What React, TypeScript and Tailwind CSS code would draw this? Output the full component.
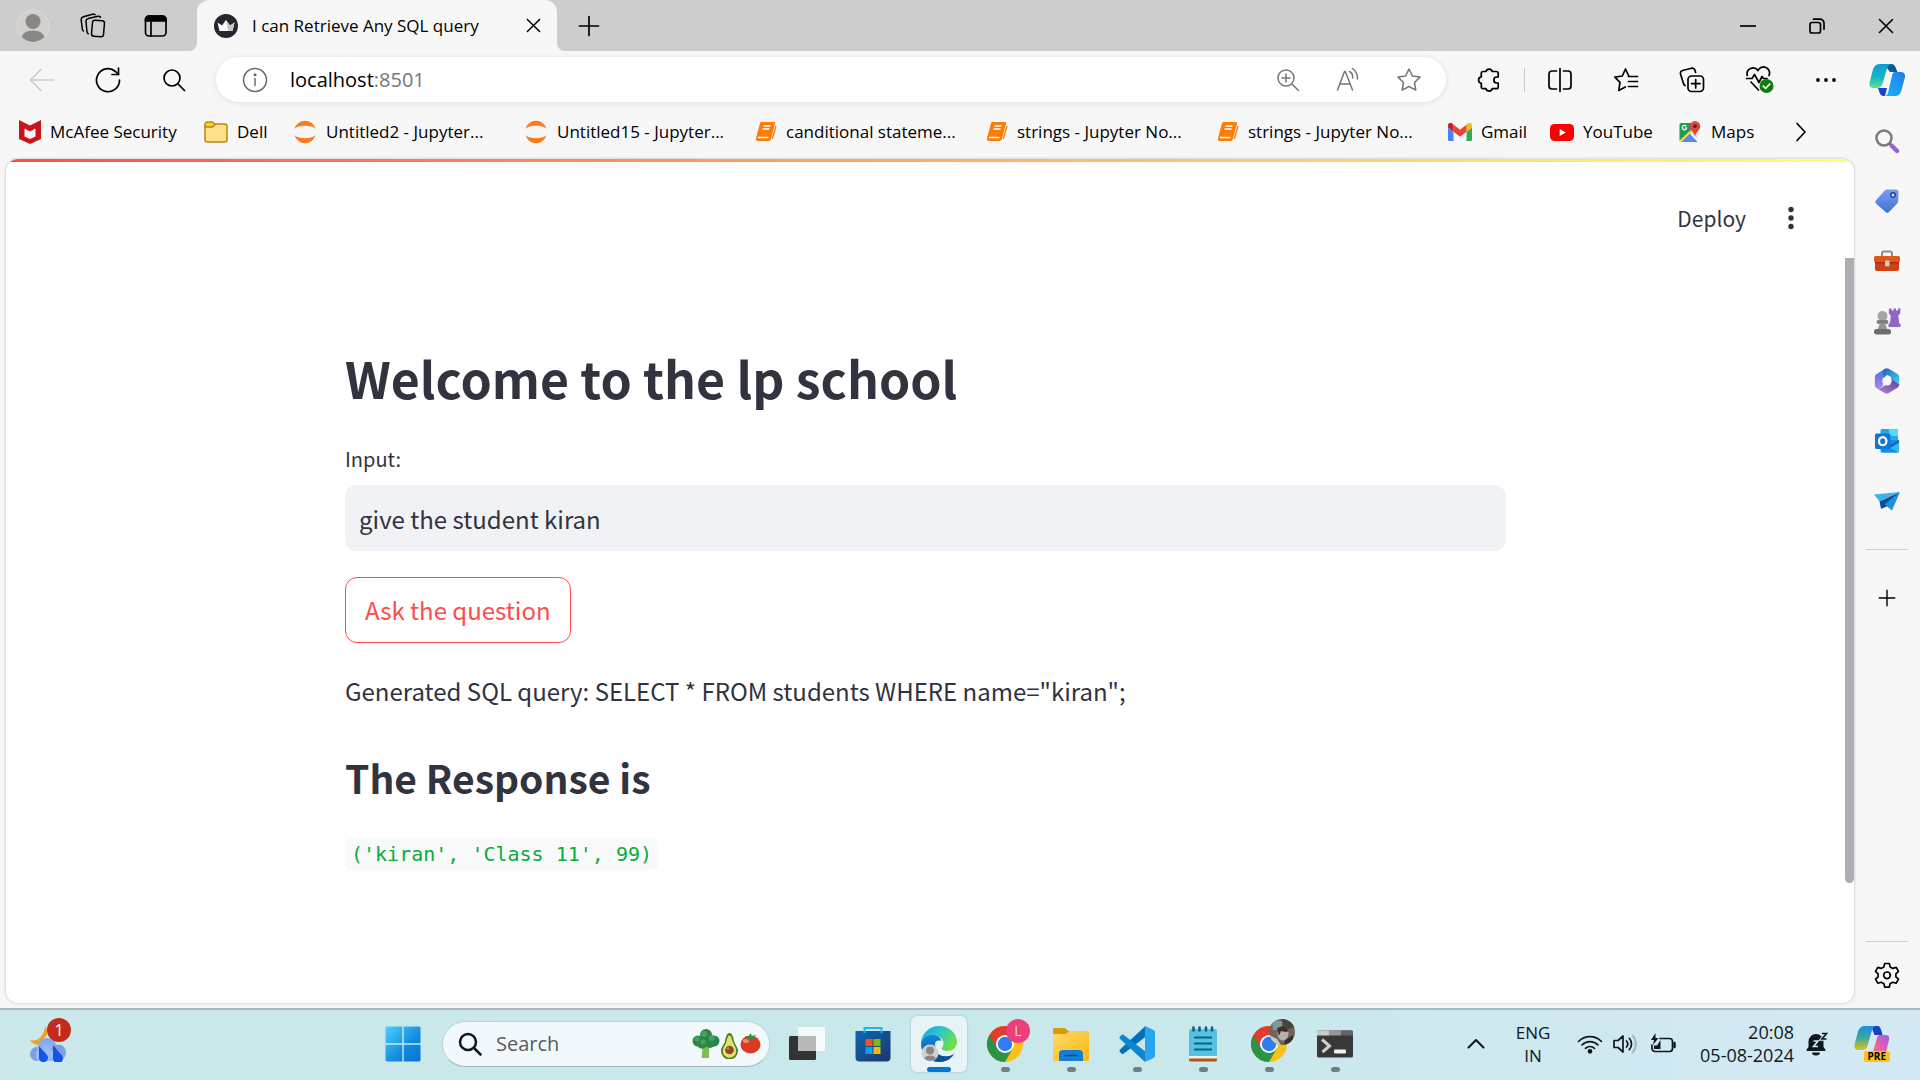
import React from "react";

type P = { className?: string };
const line = {
  fill: "none",
  stroke: "currentColor",
  strokeWidth: 1.7,
  strokeLinecap: "round" as const,
  strokeLinejoin: "round" as const,
};

function Avatar({ className }: P) {
  return (
    <svg viewBox="0 0 34 34" className={className} aria-hidden="true">
      <circle cx="17" cy="17" r="16" fill="#d2d0ce" stroke="#dedcda" />
      <circle cx="17" cy="12.500" r="7.500" fill="#8a8683" />
      <path d="M5.500 28a12 9 0 0 1 23 0a16 16 0 0 1-23 0z" fill="#8a8683" />
    </svg>
  );
}
function Workspaces() {
  return (
    <svg viewBox="0 0 26 26" className="size-[26px]" {...line} strokeWidth={1.500} aria-hidden="true">
      <rect x="12" y="7.500" width="12" height="16" rx="2.500" transform="rotate(5 18 15.500)" />
      <path d="M8.300 20.800a3 3 0 0 1-1.300-2L6 8.800a3 3 0 0 1 2.200-3.200L18 3.300a2.500 2.500 0 0 1 2.500 1" />
      <path d="M3.300 18a3 3 0 0 1-1-1.800L1.200 7a3 3 0 0 1 2.200-3.200L12.500 1.200a2.500 2.500 0 0 1 2.500.6" />
    </svg>
  );
}
function TabActions() {
  return (
    <svg viewBox="0 0 24 24" className="size-6" {...line} aria-hidden="true">
      <rect x="1.500" y="2" width="20.500" height="20" rx="3.500" />
      <path d="M1.500 7V5.500A3.500 3.500 0 0 1 5 2h13.500A3.500 3.500 0 0 1 22 5.500V7z" fill="currentColor" />
      <path d="M7 7.500V22" />
    </svg>
  );
}
function Crown() {
  return (
    <svg viewBox="0 0 24 24" className="size-6 shrink-0" aria-hidden="true">
      <circle cx="12" cy="12" r="12" fill="#262730" />
      <path d="M3.500 8.500l4.500 3L12 6l4 5.500 4.500-3L18.500 17h-13z" fill="#fff" />
      <path d="M12 6l4 5.500 4.500-3L18.500 17H14z" fill="#c9c9cc" />
    </svg>
  );
}
function Cross({ className }: P) {
  return (
    <svg viewBox="0 0 16 16" className={className} {...line} strokeWidth={1.600} aria-hidden="true">
      <path d="M1.500 1.500l13 13M14.500 1.500l-13 13" />
    </svg>
  );
}
function Plus({ className }: P) {
  return (
    <svg viewBox="0 0 22 22" className={className} {...line} aria-hidden="true">
      <path d="M11 1.500v19M1.500 11h19" />
    </svg>
  );
}
function Minimize() {
  return (
    <svg viewBox="0 0 16 16" className="size-4" {...line} strokeLinecap="butt" aria-hidden="true">
      <path d="M0 8h16" />
    </svg>
  );
}
function Restore() {
  return (
    <svg viewBox="0 0 16 16" className="size-4" {...line} aria-hidden="true">
      <rect x="1" y="4.500" width="10.500" height="10.500" rx="2" />
      <path d="M4.500 1.200H11a4 4 0 0 1 4 4v6" />
    </svg>
  );
}
function Back() {
  return (
    <svg viewBox="0 0 26 26" className="size-[26px]" {...line} strokeWidth={1.500} aria-hidden="true">
      <path d="M24.500 13H2M12 2.500L1.500 13 12 23.500" />
    </svg>
  );
}
function Refresh() {
  return (
    <svg viewBox="0 0 26 26" className="size-[26px]" {...line} aria-hidden="true">
      <path d="M24.500 13A11.500 11.500 0 1 1 20.500 4.500L23.500 7.500" />
      <path d="M23.500 1v6.500H17" />
    </svg>
  );
}
function Magnifier({ className, strokeWidth = 1.7 }: P & { strokeWidth?: number }) {
  return (
    <svg viewBox="0 0 24 24" className={className} {...line} strokeWidth={strokeWidth} aria-hidden="true">
      <circle cx="10" cy="10" r="8" />
      <path d="M16 16l6.500 6.500" />
    </svg>
  );
}
function Info() {
  return (
    <svg viewBox="0 0 26 26" className="size-[26px] shrink-0 text-[#6b6b6b]" {...line} strokeWidth={1.500} aria-hidden="true">
      <circle cx="13" cy="13" r="11.500" />
      <path d="M13 11.500v7" />
      <circle cx="13" cy="7.800" r=".8" fill="currentColor" />
    </svg>
  );
}
function ZoomIn() {
  return (
    <svg viewBox="0 0 24 24" className="size-6" {...line} strokeWidth={1.500} aria-hidden="true">
      <circle cx="10" cy="10" r="8" />
      <path d="M16 16l6.500 6.500M10 6v8M6 10h8" />
    </svg>
  );
}
function ReadAloud() {
  return (
    <svg viewBox="0 0 26 26" className="size-[26px]" {...line} strokeWidth={1.500} aria-hidden="true">
      <path d="M2.500 23L9.500 4.500h.8L17.500 23M5 17h10" />
      <path d="M14.500 4.500a6 6 0 0 1 3 6.500M17.500 1.500A12 12 0 0 1 22.500 12" />
    </svg>
  );
}
function Star() {
  return (
    <svg viewBox="0 0 26 26" className="size-[26px]" {...line} strokeWidth={1.500} aria-hidden="true">
      <path d="M13 2l3.400 7 7.600 1.100-5.500 5.400 1.300 7.600L13 19.500l-6.800 3.600 1.300-7.600L2 10.100 9.600 9z" />
    </svg>
  );
}
function Puzzle() {
  return (
    <svg viewBox="0 0 26 26" className="size-[26px]" {...line} aria-hidden="true">
      <path d="M10 4.500a3.200 3.200 0 0 1 6.200 0h4.300A1.700 1.700 0 0 1 22.200 6.200V10h-1.400a3 3 0 0 0 0 6h1.400v4a1.700 1.700 0 0 1-1.700 1.700h-4.300a3.200 3.200 0 0 1-6.200 0H7A1.700 1.700 0 0 1 5.300 20v-3.700a3.300 3.300 0 0 1 0-6.500V6.200A1.700 1.700 0 0 1 7 4.500z" />
    </svg>
  );
}
function Split() {
  return (
    <svg viewBox="0 0 26 26" className="size-[26px]" {...line} aria-hidden="true">
      <path d="M13 1.500v23M9.500 4H5a3 3 0 0 0-3 3v12a3 3 0 0 0 3 3h4.500M16.500 4H21a3 3 0 0 1 3 3v12a3 3 0 0 1-3 3h-4.500" />
    </svg>
  );
}
function Favorites() {
  return (
    <svg viewBox="0 0 26 26" className="size-[26px]" {...line} aria-hidden="true">
      <path d="M15.500 8.500L12.500 2 9.300 9 1.800 10.100l5.200 5.200L5.800 23.500l6.500-3.500" />
      <path d="M15.500 9.500H24.500M15.500 14.500H24.500M15.500 19.500H24.500" />
    </svg>
  );
}
function Collections() {
  return (
    <svg viewBox="0 0 26 26" className="size-[26px]" {...line} aria-hidden="true">
      <rect x="9" y="9" width="15.500" height="15.500" rx="3.500" />
      <path d="M16.700 12.500v8.500M12.500 16.700H21M6 18.500A3 3 0 0 1 4.500 16.500L1.500 7a3 3 0 0 1 2-3.500L12.500 1.200a3 3 0 0 1 3.500 2l.6 2.300" />
    </svg>
  );
}
function Essentials() {
  return (
    <svg viewBox="0 0 30 28" className="h-7 w-[30px]" {...line} aria-hidden="true">
      <path d="M2.300 9.500A6 6 0 0 1 13 4.500a6 6 0 0 1 11 5M6 16l7.500 8" />
      <path d="M1.500 12.500H7l2.500-4 4.500 8 3-6 1.500 2H22" />
      <circle cx="21.500" cy="20" r="7" fill="#107c10" stroke="none" />
      <path d="M18.300 20.200l2.300 2.300 4.200-4.500" stroke="#fff" />
    </svg>
  );
}
function Dots() {
  return (
    <svg viewBox="0 0 22 6" className="h-1.5 w-[22px]" fill="currentColor" aria-hidden="true">
      <circle cx="3" cy="3" r="1.900" />
      <circle cx="11" cy="3" r="1.900" />
      <circle cx="19" cy="3" r="1.900" />
    </svg>
  );
}
function Copilot() {
  return (
    <svg viewBox="0 0 36 32" className="h-8 w-9" aria-hidden="true">
      <defs>
        <linearGradient id="cpA" x1="0" y1="0" x2="0" y2="1">
          <stop offset="0" stopColor="#0b9ddb" />
          <stop offset=".55" stopColor="#12b5c4" />
          <stop offset="1" stopColor="#5fe08f" />
        </linearGradient>
        <linearGradient id="cpB" x1="1" y1="0" x2="0" y2="1">
          <stop offset="0" stopColor="#2a7be8" />
          <stop offset="1" stopColor="#13b4ff" />
        </linearGradient>
      </defs>
      <path d="M15 0h7c3 0 4 1.500 5 4.500L28.500 8H21z" fill="#0a5c93" />
      <path d="M9 24h9l-2 8h-1c-3 0-4-2-5-5z" fill="#1540d0" />
      <path d="M11 0h12c-3 0-4.300 2-5.200 5L13.500 20c-.8 2.800-2.500 4-5 4H4.500C1 24 0 21.500.7 18L4 5.500C5 2 7.500 0 11 0z" fill="url(#cpA)" />
      <path d="M26 8h6c3.200 0 4.600 2.400 3.800 6L32.500 26c-1 4-3 6-6.500 6H15c2.500 0 3.500-1.500 4.200-4L23 12c.7-2.500 1.200-4 3-4z" fill="url(#cpB)" />
    </svg>
  );
}
function McAfee() {
  return (
    <svg viewBox="0 0 22 24" className="h-6 w-[22px] shrink-0" aria-hidden="true">
      <path d="M0 0l11 5.500L22 0v19l-11 5-11-5z" fill="#c8151d" />
      <path d="M5.500 8.500l5.500 3 5.500-3v8L11 19l-5.500-2.500z" fill="#f7f7f7" />
    </svg>
  );
}
function Folder() {
  return (
    <svg viewBox="0 0 24 22" className="h-[22px] w-6 shrink-0" fill="#ffe08a" stroke="#b88a0b" strokeWidth="1.500" aria-hidden="true">
      <rect x="1" y="3" width="22" height="18" rx="2.500" />
      <path d="M1 6V3.500A2.500 2.500 0 0 1 3.500 1h5L11 3.500 8.500 6z" fill="#ffce2e" />
    </svg>
  );
}
function Jupyter() {
  return (
    <svg viewBox="0 0 24 24" className="size-6 shrink-0" fill="#fb7b22" aria-hidden="true">
      <path d="M1.500 9a10.800 10.800 0 0 1 21 0C19 4.800 5 4.800 1.500 9zM1.500 15a10.800 10.800 0 0 0 21 0C19 19.200 5 19.200 1.500 15z" />
    </svg>
  );
}
function Book() {
  return (
    <svg viewBox="0 0 22 20" className="h-5 w-[22px] shrink-0" aria-hidden="true">
      <path d="M6.500 0h12.300c1 0 1.500.8 1.200 1.700L16 16.500c-.4 1.300-1 2.500-2.300 2.500H3c-1.500 0-2.500-1.200-2-2.700L5 1.200C5.300.4 5.700 0 6.500 0z" fill="#fb7d07" />
      <path d="M3 15.500h10.500M8.500 4h7M7.500 7h7" stroke="#fff" strokeWidth="1.500" />
      <path d="M21 4L17.300 17" stroke="#fb7d07" strokeWidth="1.300" />
    </svg>
  );
}
function Gmail() {
  return (
    <svg viewBox="0 0 24 18" className="h-[18px] w-6 shrink-0" aria-hidden="true">
      <path d="M1.600 18h3.900V8.700L0 4.500v11.900C0 17.300.7 18 1.600 18z" fill="#4285f4" />
      <path d="M18.500 18h3.900c.9 0 1.600-.7 1.600-1.600V4.500l-5.500 4.200z" fill="#34a853" />
      <path d="M18.500 1.700v7L24 4.500V2.300c0-2-2.300-3.200-3.900-2z" fill="#fbbc04" />
      <path d="M5.500 8.700v-7l6.500 5 6.500-5v7l-6.500 5z" fill="#ea4335" />
      <path d="M0 2.300v2.200l5.500 4.200v-7L3.900.3C2.300-.9 0 .3 0 2.300z" fill="#c5221f" />
    </svg>
  );
}
function YouTube() {
  return (
    <svg viewBox="0 0 24 17" className="h-[17px] w-6 shrink-0" aria-hidden="true">
      <rect width="24" height="17" rx="4.500" fill="#f00" />
      <path d="M9.700 5v7l6-3.500z" fill="#fff" />
    </svg>
  );
}
function Maps() {
  return (
    <svg viewBox="0 0 24 24" className="size-6 shrink-0" aria-hidden="true">
      <path d="M3.500 3H15l5 8v9a2 2 0 0 1-2 2H3.500a2 2 0 0 1-2-2V5a2 2 0 0 1 2-2z" fill="#dfe3e6" />
      <path d="M3.500 3H15v7L1.500 21V5a2 2 0 0 1 2-2z" fill="#1e9d57" />
      <path d="M3 22l9-9 8 9z" fill="#4c8df6" />
      <path d="M1.500 20.500L15 8l1.500 1.500L3 22z" fill="#ffd147" />
      <path d="M13 14l7.500 7.500" stroke="#fff" strokeWidth="1.500" />
      <path d="M17 1a5.200 5.200 0 0 1 5.200 5.200c0 4-4.200 5.800-5.200 10.300-1-4.500-5.200-6.300-5.200-10.300A5.200 5.200 0 0 1 17 1z" fill="#e0483b" />
      <circle cx="17" cy="6.200" r="1.900" fill="#7d1a14" />
      <path d="M8.300 6.300a2.200 2.200 0 1 0 .4 1.700H6.800" fill="none" stroke="#fff" strokeWidth="1.200" />
    </svg>
  );
}
function ChevronRight() {
  return (
    <svg viewBox="0 0 12 20" className="h-5 w-3" {...line} aria-hidden="true">
      <path d="M2 1.500L10 10l-8 8.500" />
    </svg>
  );
}

/* Edge sidebar icons */
function SideSearch() {
  return (
    <svg viewBox="0 0 26 26" className="size-[26px]" fill="none" aria-hidden="true">
      <circle cx="10" cy="10" r="7.500" stroke="#7d7d7d" strokeWidth="2.600" />
      <path d="M15.500 15.500l2 2" stroke="#6a6a6a" strokeWidth="2.600" />
      <path d="M18 18l5 5" stroke="#9764c9" strokeWidth="4.500" strokeLinecap="round" />
    </svg>
  );
}
function SideTag() {
  return (
    <svg viewBox="0 0 26 26" className="size-[26px]" aria-hidden="true">
      <defs>
        <linearGradient id="tagG" x1="0" y1="0" x2="0" y2="1">
          <stop offset="0" stopColor="#74a1f2" />
          <stop offset="1" stopColor="#4570d6" />
        </linearGradient>
      </defs>
      <path d="M13 1.500h9A2.500 2.500 0 0 1 24.500 4l-.3 9.500a3 3 0 0 1-1 2L15 24a2.500 2.500 0 0 1-3.500 0L2 15.500a2.300 2.300 0 0 1 0-3.300l8.500-9.500A3.500 3.500 0 0 1 13 1.500z" fill="url(#tagG)" />
      <circle cx="19" cy="7" r="2.300" fill="#c9d9f7" stroke="#24408f" strokeWidth="1.400" />
    </svg>
  );
}
function SideTools() {
  return (
    <svg viewBox="0 0 28 24" className="h-6 w-7" aria-hidden="true">
      <path d="M9 8V4.500A2 2 0 0 1 11 2.500h6a2 2 0 0 1 2 2V8" fill="none" stroke="#8d8d8d" strokeWidth="2" />
      <path d="M2 11h24v9a2 2 0 0 1-2 2H4a2 2 0 0 1-2-2z" fill="#cf4111" />
      <rect x="1" y="7" width="26" height="6.500" rx="1.500" fill="#e2571c" />
      <rect x="2" y="13" width="24" height="1.300" fill="#9c2c09" />
      <rect x="12" y="11.500" width="4.500" height="6" rx="1" fill="#c9c9c9" />
    </svg>
  );
}
function SideGames() {
  return (
    <svg viewBox="0 0 28 28" className="size-7" aria-hidden="true">
      <path d="M16 1.500h2.500v2h2v-2H23v2h2v-2h2.300v5l-2 2 .8 7.500 1.400 1v3h-12v-3l1.500-1 .8-7.500-2-2z" fill="#9065c4" />
      <circle cx="9.500" cy="9" r="5" fill="#a5a5a5" />
      <rect x="3.500" y="13" width="12" height="4" rx="2" fill="#808080" />
      <path d="M7 16h5l2.500 7h-10z" fill="#949494" />
      <rect x="1" y="22" width="17" height="5.500" rx="2.500" fill="#6c6c6c" />
    </svg>
  );
}
function SideM365() {
  return (
    <svg viewBox="0 0 26 28" className="h-7 w-[26px]" aria-hidden="true">
      <defs>
        <linearGradient id="mA" x1="0" y1="0" x2="0" y2="1">
          <stop offset="0" stopColor="#4c73dc" />
          <stop offset="1" stopColor="#a98be6" />
        </linearGradient>
        <linearGradient id="mB" x1="0" y1="0" x2="1" y2="1">
          <stop offset="0" stopColor="#1d63b5" />
          <stop offset="1" stopColor="#4fd0fb" />
        </linearGradient>
        <linearGradient id="mC" x1="1" y1="0" x2="0" y2="1">
          <stop offset="0" stopColor="#5e3d8c" />
          <stop offset="1" stopColor="#b287e4" />
        </linearGradient>
      </defs>
      <path d="M10 2.500L2.500 7A3.500 3.500 0 0 0 .8 10v8a3.500 3.500 0 0 0 1.700 3l2 1.200L8.800 19V9z" fill="url(#mA)" />
      <path d="M8.800 12V5c0-1.500.5-2.500 2-3.200a4 4 0 0 1 4 0L23.500 7a3.500 3.500 0 0 1 1.700 3v8l-8-5.500V10L13 8z" fill="url(#mB)" />
      <path d="M25.200 17.500a3.500 3.500 0 0 1-1.700 3.200l-8.700 5.200a4 4 0 0 1-4 0L3 21.500c2.500.5 4-.5 5.800-1.800L17.200 15v-3z" fill="url(#mC)" />
      <circle cx="13" cy="14" r="4.600" fill="#f7f7f7" />
    </svg>
  );
}
function SideOutlook() {
  return (
    <svg viewBox="0 0 26 26" className="size-[26px]" aria-hidden="true">
      <rect x="6.500" y="1" width="17.500" height="14" rx="1.500" fill="#28a8ea" />
      <rect x="15" y="1" width="9" height="7" fill="#50d9ff" />
      <path d="M6.500 12h18.500v11a1.800 1.800 0 0 1-1.800 1.800H8.300A1.800 1.800 0 0 1 6.500 23z" fill="#1490df" />
      <path d="M25 12L14 19l11 5.500z" fill="#35b8f1" />
      <path d="M25 12v2.500L14 21v-2.500z" fill="#0a5fae" />
      <rect x="1" y="5.500" width="15.500" height="15.500" rx="1.500" fill="#0f78d4" />
      <ellipse cx="8.700" cy="13.200" rx="3.700" ry="4" fill="none" stroke="#fff" strokeWidth="2.300" />
    </svg>
  );
}
function SideSend() {
  return (
    <svg viewBox="0 0 28 22" className="h-[22px] w-7" aria-hidden="true">
      <path d="M1 4.500L27 2 6.500 11.500z" fill="#3cb4ee" />
      <path d="M27 2L19 20.500 11 14z" fill="#1c92df" />
      <path d="M27 2L6.500 11.500 8 19l3.500-4.500z" fill="#0d4f93" />
      <path d="M8 19l3.500-5 2.500 2.300z" fill="#0a3c78" />
    </svg>
  );
}
function Gear() {
  return (
    <svg viewBox="0 0 28 28" className="size-7" {...line} aria-hidden="true">
      <path d="M11.700 2.500h4.600l.8 3.400 2.700 1.500 3.400-1 2.300 4-2.600 2.400v3l2.600 2.400-2.300 4-3.400-1-2.700 1.500-.8 3.400h-4.600l-.8-3.400-2.700-1.500-3.400 1-2.300-4 2.600-2.400v-3L2.500 10.400l2.300-4 3.400 1 2.700-1.500z" />
      <circle cx="14" cy="14.300" r="3.300" />
    </svg>
  );
}

/* Taskbar icons */
function Weather() {
  return (
    <svg viewBox="0 0 36 36" className="size-9" aria-hidden="true">
      <defs>
        <linearGradient id="cloudG" x1="0" y1="0" x2="0" y2="1">
          <stop offset="0" stopColor="#7fa6ea" />
          <stop offset="1" stopColor="#a8c5fb" />
        </linearGradient>
      </defs>
      <path d="M15 0c2 3 3 5.500 2 9L8 19c-3-.5-6-2-8-5 6 2 14-2 15-14z" fill="#f5a01f" />
      <circle cx="7" cy="28" r="7" fill="#7d9fe6" />
      <circle cx="17" cy="22" r="10" fill="url(#cloudG)" />
      <circle cx="28" cy="26.500" r="8" fill="#7d9fe6" />
      <rect x="6" y="24" width="24" height="11" rx="4" fill="#9bbaf6" />
      <path d="M9 20l8 9a4.500 4.500 0 1 1-8 2zM23 19l9 10.500a5 5 0 1 1-9 2z" fill="#1553e6" />
    </svg>
  );
}
function WindowsLogo() {
  return (
    <svg viewBox="0 0 36 36" className="size-9" aria-hidden="true">
      <defs>
        <linearGradient id="winG" x1="0" y1="0" x2="1" y2="1">
          <stop offset="0" stopColor="#4bd0ff" />
          <stop offset=".6" stopColor="#128bdc" />
          <stop offset="1" stopColor="#0474d0" />
        </linearGradient>
      </defs>
      <path d="M1.500.5h15.800v16.800H.5V1.500zM18.700.5h15.800l1 1v15.800H18.700zM.5 18.700h16.800v16.800H1.500l-1-1zM18.700 18.700h16.800v15.800l-1 1H18.700z" fill="url(#winG)" />
    </svg>
  );
}
function Veggies() {
  return (
    <svg viewBox="0 0 70 30" className="h-[30px] w-[70px]" aria-hidden="true">
      <path d="M8 14h13l-4 6v9H9.500l1-8z" fill="#7cc04b" />
      <g fill="#2c8549">
        <circle cx="14" cy="6" r="6" />
        <circle cx="6" cy="12" r="5.500" />
        <circle cx="22" cy="12" r="5.500" />
        <circle cx="10" cy="14" r="5.500" />
        <circle cx="18" cy="14" r="5" />
      </g>
      <g fill="#45a25c">
        <circle cx="12" cy="5" r="3" />
        <circle cx="5" cy="10" r="2.500" />
        <circle cx="20" cy="9" r="3" />
        <circle cx="11" cy="13" r="2.500" />
      </g>
      <path d="M37.500 4c3 0 3.500 4 4.500 8s4 6 4 10a8.500 8.500 0 0 1-17 0c0-4 3-6 4-10s1.500-8 4.500-8z" fill="#4f7d1f" />
      <path d="M37.500 6.500c2 0 2.200 3.500 3.200 6.500s3.500 5.500 3.500 9a6.700 6.700 0 0 1-13.400 0c0-3.500 2.500-6 3.500-9s1.200-6.500 3.200-6.500z" fill="#dfe373" />
      <circle cx="37.500" cy="21" r="4.300" fill="#8b4d20" />
      <circle cx="36" cy="19.500" r="1.300" fill="#c48a55" />
      <ellipse cx="58.500" cy="15.500" rx="10" ry="9" fill="#d93a24" />
      <ellipse cx="54" cy="12" rx="3" ry="2" fill="#f08a72" />
      <path d="M59 4l.5 3 5-1-3.500 3 3 2.500-5-1.500-3 2 .5-3-4-1.500 4-.5z" fill="#3c8d35" />
    </svg>
  );
}
function TaskView() {
  return (
    <svg viewBox="0 0 36 36" className="size-9" aria-hidden="true">
      <rect x="0" y="10" width="27" height="24" rx="1.500" fill="#333" />
      <rect x="9" y="1" width="27" height="24" rx="1" fill="#fdfdfd" opacity=".85" />
      <rect x="9" y="10" width="18" height="15" fill="#b9b9b9" />
    </svg>
  );
}
function Store() {
  return (
    <svg viewBox="0 0 36 36" className="size-9" aria-hidden="true">
      <defs>
        <linearGradient id="storeG" x1="0" y1="0" x2="1" y2="1">
          <stop offset="0" stopColor="#0f65b8" />
          <stop offset="1" stopColor="#1c3767" />
        </linearGradient>
      </defs>
      <path d="M.5 5h35v26.500a4 4 0 0 1-4 4h-27a4 4 0 0 1-4-4z" fill="url(#storeG)" />
      <path d="M9.500 7V2h17v5" fill="none" stroke="#1bb5f0" strokeWidth="2" />
      <rect x="10.500" y="13" width="7" height="7" fill="#f25022" />
      <rect x="18.500" y="13" width="7" height="7" fill="#7fba00" />
      <rect x="10.500" y="21" width="7" height="7" fill="#00a4ef" />
      <rect x="18.500" y="21" width="7" height="7" fill="#ffb900" />
    </svg>
  );
}
function Edge() {
  return (
    <svg viewBox="0 0 36 36" className="size-9" aria-hidden="true">
      <defs>
        <linearGradient id="edgeA" x1="0" y1="0" x2="1" y2=".5">
          <stop offset="0" stopColor="#1f9fdf" />
          <stop offset=".5" stopColor="#2cc4cf" />
          <stop offset="1" stopColor="#6de043" />
        </linearGradient>
        <linearGradient id="edgeB" x1="0" y1="0" x2="0" y2="1">
          <stop offset="0" stopColor="#1286d6" />
          <stop offset="1" stopColor="#0c5aa8" />
        </linearGradient>
      </defs>
      <path d="M0 18C1 11 6 8.500 11 8.500c6 0 10 4 9.500 8.500-3-1-6 1-6 5 0 5 5 8.500 11 8.500 3 0 5.500-1 7.500-2.500C30 33 24.500 36 18 36A18 18 0 0 1 0 18z" fill="url(#edgeB)" />
      <path d="M13 21c0 6 5 9.500 12 9.500 3.500 0 6-1 8-2.500C30 33 24.500 36 18 36c-6-2-8-9-5-15z" fill="#124d92" />
      <path d="M0 17A18 18 0 0 1 18 0c10 0 18 7 18 16 0 5-4 9-9 9-4 0-6.500-1.200-6.500-2.800 0-1.200 2.500-2.200 2-5.200C22 12 17 9 12 9 6 9 2 12 0 17z" fill="url(#edgeA)" />
      <circle cx="18" cy="18.500" r="4" fill="#e6f4f8" />
      <circle cx="9" cy="27" r="8.500" fill="#d2d0ce" />
      <circle cx="9" cy="24.500" r="4" fill="#8a8683" />
      <path d="M3.300 32.500c1-4 10.500-4 11.500 0a8.500 8.500 0 0 1-11.500 0z" fill="#8a8683" />
    </svg>
  );
}
function Chrome() {
  return (
    <svg viewBox="0 0 36 36" className="size-9" aria-hidden="true">
      <circle cx="18" cy="18" r="18" fill="#fbc116" />
      <path d="M18 18L2.400 9A18 18 0 0 0 18 36l7.800-13.500z" fill="#2b9246" />
      <path d="M18 9h15.600A18 18 0 0 0 2.400 9l7.800 13.500z" fill="#e33b2e" />
      <circle cx="18" cy="18" r="9" fill="#fff" />
      <circle cx="18" cy="18" r="7.200" fill="#2f7bf0" />
    </svg>
  );
}
function Photo() {
  return (
    <svg viewBox="0 0 26 26" className="size-[26px]" aria-hidden="true">
      <clipPath id="photoClip">
        <circle cx="13" cy="13" r="13" />
      </clipPath>
      <g clipPath="url(#photoClip)">
        <rect width="26" height="26" fill="#6d655e" />
        <path d="M3 2h10v9H4z" fill="#7d9c91" />
        <path d="M12 0h14v8l-10 3z" fill="#4b433f" />
        <ellipse cx="14" cy="15" rx="5.500" ry="6.500" fill="#b9b0aa" />
        <path d="M8 9l6-2 6 5-3 1-5-1-2 5z" fill="#38312e" />
        <path d="M0 16l8 4 4 6H0z" fill="#c9c9c6" />
        <path d="M16 21l8-5v10h-9z" fill="#38322f" />
      </g>
    </svg>
  );
}
function Explorer() {
  return (
    <svg viewBox="0 0 36 36" className="size-9" aria-hidden="true">
      <defs>
        <linearGradient id="fileG" x1="0" y1="0" x2="1" y2="1">
          <stop offset="0" stopColor="#ffd968" />
          <stop offset="1" stopColor="#fcb713" />
        </linearGradient>
      </defs>
      <path d="M0 3.500A1.500 1.500 0 0 1 1.500 2H11c2 0 3 3 5 3h18v8H0z" fill="#d99a0b" />
      <path d="M0 8h12c2 0 3-3 5-3h17.500A1.500 1.500 0 0 1 36 6.500v27a1.500 1.500 0 0 1-1.500 1.500h-33A1.500 1.500 0 0 1 0 33.500z" fill="url(#fileG)" />
      <path d="M6 35v-7a4 4 0 0 1 4-4h16a4 4 0 0 1 4 4v7z" fill="#147fd2" />
      <path d="M11 29.500h14" stroke="#0a4f8d" strokeWidth="1.500" />
    </svg>
  );
}
function VSCode() {
  return (
    <svg viewBox="0 0 36 36" className="size-9" aria-hidden="true">
      <path d="M26.500 0L1 23.500l-.5 2L3 28l1.500-.2L27 10.500z" fill="#0070b8" />
      <path d="M3 8.500L.5 11l.3 1.800L26 36l1-10L4.500 8.700z" fill="#0f86cf" />
      <path d="M26 0l8.500 4c1 .5 1.500 1.200 1.500 2.300v23.400c0 1-.5 1.800-1.500 2.300L26 36z" fill="#29a5ef" />
    </svg>
  );
}
function Notepad() {
  return (
    <svg viewBox="0 0 36 36" className="size-9" aria-hidden="true">
      <path d="M4 29h28v5a1.500 1.500 0 0 1-1.500 1.500h-25A1.500 1.500 0 0 1 4 34z" fill="#b3541a" />
      <rect x="4" y="29" width="28" height="3.500" fill="#eef1f2" />
      <path d="M6 3h24a2 2 0 0 1 2 2v25H4V5a2 2 0 0 1 2-2z" fill="#54c2e0" />
      <path d="M9 11.500h18M9 17.500h18M9 23.500h18" stroke="#0a6287" strokeWidth="1.800" />
      <path d="M8.500 1.500v3M14.500 1.500v3M21 1.500v3M27 1.500v3" stroke="#0a6287" strokeWidth="2.600" strokeLinecap="round" />
    </svg>
  );
}
function Terminal() {
  return (
    <svg viewBox="0 0 36 36" className="size-9" aria-hidden="true">
      <rect y="4.500" width="36" height="27" rx="1.500" fill="#383838" />
      <path d="M1.500 4.500H12v5H0V6a1.500 1.500 0 0 1 1.500-1.500z" fill="#cbcbcb" />
      <rect x="12" y="4.500" width="12" height="5" fill="#979797" />
      <path d="M24 4.500h10.500A1.500 1.500 0 0 1 36 6v3.500H24z" fill="#636363" />
      <path d="M5 13.500l7.500 6.500L5.500 26" fill="none" stroke="#cfcfcf" strokeWidth="3" />
      <rect x="17" y="23.500" width="12" height="4" rx="1" fill="#f2f2f2" />
    </svg>
  );
}
function ChevronUp() {
  return (
    <svg viewBox="0 0 18 12" className="h-3 w-[18px]" {...line} strokeWidth={2} aria-hidden="true">
      <path d="M1.500 9.500L9 2l7.500 7.500" />
    </svg>
  );
}
function Wifi() {
  return (
    <svg viewBox="0 0 26 20" className="h-5 w-[26px]" {...line} aria-hidden="true">
      <path d="M1.500 7.500a16 16 0 0 1 23 0M5 11a11.300 11.300 0 0 1 16 0M8.500 14.300a6.500 6.500 0 0 1 9 0" />
      <circle cx="13" cy="17.300" r="1.500" fill="currentColor" />
    </svg>
  );
}
function Speaker() {
  return (
    <svg viewBox="0 0 26 22" className="h-[22px] w-[26px]" {...line} aria-hidden="true">
      <path d="M2 7.500h4L11 3v16l-5-4.500H2z" />
      <path d="M14.500 8a4.500 4.500 0 0 1 0 6M17.300 5.300a8.500 8.500 0 0 1 0 11.400" />
      <path d="M20.500 2.500a12.500 12.500 0 0 1 0 17" stroke="#9fb0b8" />
    </svg>
  );
}
function Battery() {
  return (
    <svg viewBox="0 0 26 22" className="h-[22px] w-[26px]" {...line} aria-hidden="true">
      <path d="M10 5.500h9.500a3 3 0 0 1 3 3v7a3 3 0 0 1-3 3H5a3 3 0 0 1-3-3V12" />
      <path d="M24.500 10v4" strokeWidth="2.500" />
      <path d="M4 16v-3.500h3l3.500-5.500v9z" fill="currentColor" stroke="none" />
      <path d="M5.500 0L1 7h3l-1 5 5.500-7H5.500z" fill="currentColor" stroke="none" />
    </svg>
  );
}
function Bell() {
  return (
    <svg viewBox="0 0 22 24" className="h-6 w-[22px]" aria-hidden="true">
      <path d="M10 2a7.500 7.500 0 0 1 7.500 7.500V15l2 2.800c.3.600 0 1.200-.7 1.200H1.200c-.7 0-1-.6-.7-1.200L2.500 15V9.500A7.500 7.500 0 0 1 10 2z" fill="#0c1a20" />
      <path d="M6 20.500h8a4 3 0 0 1-8 0z" fill="#0c1a20" />
      <path d="M7.500 9H12l-4.500 5.500H12" fill="none" stroke="#d4e9f4" strokeWidth="1.600" />
      <path d="M16 1.500h4.500L16 7h4.500" fill="none" stroke="#d4e9f4" strokeWidth="3.500" />
      <path d="M16 1.500h4.500L16 7h4.500" fill="none" stroke="#0c1a20" strokeWidth="1.600" />
    </svg>
  );
}
function CopilotPre() {
  return (
    <svg viewBox="0 0 36 28" className="h-7 w-9" aria-hidden="true">
      <defs>
        <linearGradient id="preA" x1="0" y1="0" x2="0" y2="1">
          <stop offset="0" stopColor="#1d8ee0" />
          <stop offset=".45" stopColor="#2fa7a3" />
          <stop offset="1" stopColor="#e4c21c" />
        </linearGradient>
        <linearGradient id="preB" x1="1" y1="0" x2="0" y2="1">
          <stop offset="0" stopColor="#9a5cf0" />
          <stop offset=".6" stopColor="#f0629a" />
          <stop offset="1" stopColor="#fb8a4e" />
        </linearGradient>
      </defs>
      <path d="M17 0h6c3 0 3.500 2 4.500 5l1 4h-8z" fill="#1c3fc6" />
      <path d="M11 0h12c-3 0-4.500 2-5.300 5L13.500 20c-.8 3-2.500 4-5 4H4C.5 24 0 21 .7 18L4 5.500C5 2 7.500 0 11 0z" fill="url(#preA)" />
      <path d="M26 9h5.500c3.200 0 4.300 2.200 3.500 5l-3.500 14H14.500c3 0 4.300-1.500 5-4L23 12c.6-2 1.200-3 3-3z" fill="url(#preB)" />
    </svg>
  );
}

function IconButton({ label, className = "", children }: { label: string; className?: string; children: React.ReactNode }) {
  return (
    <button type="button" aria-label={label} className={`flex shrink-0 items-center justify-center ${className}`}>
      {children}
    </button>
  );
}

const bookmarks: { name: string; icon: React.ReactNode; width: string }[] = [
  { name: "McAfee Security", icon: <McAfee />, width: "w-[185px]" },
  { name: "Dell", icon: <Folder />, width: "w-[89px]" },
  { name: "Untitled2 - Jupyter...", icon: <Jupyter />, width: "w-[231px]" },
  { name: "Untitled15 - Jupyter...", icon: <Jupyter />, width: "w-[231px]" },
  { name: "canditional stateme...", icon: <Book />, width: "w-[231px]" },
  { name: "strings - Jupyter No...", icon: <Book />, width: "w-[231px]" },
  { name: "strings - Jupyter No...", icon: <Book />, width: "w-[231px]" },
  { name: "Gmail", icon: <Gmail />, width: "w-[102px]" },
  { name: "YouTube", icon: <YouTube />, width: "w-[128px]" },
  { name: "Maps", icon: <Maps />, width: "w-[105px]" },
];

function TitleBar() {
  return (
    <header className="flex h-[51px] items-stretch bg-[#cdcdcd]">
      <div className="flex flex-1 bg-[#f7f7f7]">
        <div className="flex w-[197px] items-center rounded-br-lg bg-[#cdcdcd] pl-4">
          <IconButton label="Profile" className="w-[34px]"><Avatar className="size-[34px]" /></IconButton>
          <IconButton label="Workspaces" className="ml-[30px] w-[26px]"><Workspaces /></IconButton>
          <IconButton label="Tab actions" className="ml-[38px] w-6"><TabActions /></IconButton>
        </div>
        <div className="bg-[#cdcdcd]">
          <div className="flex h-full w-[360px] items-center rounded-t-xl bg-[#f7f7f7] pr-4 pl-[17px]">
            <Crown />
            <span className="ml-3.5 flex-1 truncate text-[17px]">I can Retrieve Any SQL query</span>
            <IconButton label="Close tab" className="size-4"><Cross className="size-[15px]" /></IconButton>
          </div>
        </div>
        <div className="flex flex-1 rounded-bl-lg bg-[#cdcdcd]">
          <IconButton label="New tab" className="ml-5 w-6"><Plus className="size-[22px]" /></IconButton>
          <div className="ml-auto flex items-stretch">
            <IconButton label="Minimize" className="w-[69px]"><Minimize /></IconButton>
            <IconButton label="Restore" className="w-[69px]"><Restore /></IconButton>
            <IconButton label="Close" className="w-[69px]"><Cross className="size-4" /></IconButton>
          </div>
        </div>
      </div>
    </header>
  );
}

function Toolbar() {
  return (
    <div className="flex h-[57px] items-center pr-[17px] pl-[29px]">
      <IconButton label="Back" className="w-[26px] text-[#cbcbcb]"><Back /></IconButton>
      <IconButton label="Refresh" className="ml-10 w-[26px]"><Refresh /></IconButton>
      <IconButton label="Search" className="ml-[41px] w-6"><Magnifier className="size-6" /></IconButton>
      <div className="ml-[30px] flex h-[45px] flex-1 items-center rounded-full bg-white pr-6 pl-[26px] shadow-[0_1px_6px_rgba(0,0,0,0.09)]">
        <Info />
        <a href="http://localhost:8501" className="ml-[22px] flex-1 text-xl">
          localhost<span className="text-[#767676]">:8501</span>
        </a>
        <div className="flex items-center gap-[35px] text-[#767676]">
          <IconButton label="Zoom"><ZoomIn /></IconButton>
          <IconButton label="Read aloud"><ReadAloud /></IconButton>
          <IconButton label="Add to favorites"><Star /></IconButton>
        </div>
      </div>
      <IconButton label="Extensions" className="ml-[30px]"><Puzzle /></IconButton>
      <span className="ml-[22px] h-6 w-px bg-[#c8c8c8]" />
      <div className="ml-[22px] flex items-center gap-10">
        <IconButton label="Split screen"><Split /></IconButton>
        <IconButton label="Favorites"><Favorites /></IconButton>
        <IconButton label="Collections"><Collections /></IconButton>
        <IconButton label="Browser essentials"><Essentials /></IconButton>
        <IconButton label="Settings and more"><Dots /></IconButton>
      </div>
    </div>
  );
}

function Bookmarks() {
  return (
    <nav aria-label="Bookmarks" className="flex h-[51px] items-center overflow-hidden pb-[3px] pl-[19px]">
      {bookmarks.map((b, i) => (
        <a key={i} href="#" className={`flex shrink-0 items-center gap-[9px] text-[17px] ${b.width}`}>
          {b.icon}
          <span className="whitespace-nowrap">{b.name}</span>
        </a>
      ))}
      <IconButton label="More bookmarks" className="ml-3"><ChevronRight /></IconButton>
    </nav>
  );
}

function Sidebar() {
  const apps: [string, React.ReactNode][] = [
    ["Search", <SideSearch />],
    ["Shopping", <SideTag />],
    ["Tools", <SideTools />],
    ["Games", <SideGames />],
    ["Microsoft 365", <SideM365 />],
    ["Outlook", <SideOutlook />],
    ["Drop", <SideSend />],
  ];
  return (
    <aside className="flex w-[66px] shrink-0 flex-col items-center">
      <IconButton label="Copilot" className="mb-0.5 h-[58px]"><Copilot /></IconButton>
      {apps.map(([name, icon]) => (
        <IconButton key={name} label={name} className="h-[60px]">{icon}</IconButton>
      ))}
      <span className="mt-[18px] h-px w-[42px] bg-[#cfcfcf]" />
      <IconButton label="Customize" className="mt-6 h-12"><Plus className="size-[18px]" /></IconButton>
      <span className="mt-auto h-px w-[42px] bg-[#cfcfcf]" />
      <IconButton label="Settings" className="h-[66px]"><Gear /></IconButton>
    </aside>
  );
}

function AppPage() {
  return (
    <main className="relative ml-1.5 flex-1 overflow-hidden rounded-xl bg-white font-['Noto_Sans_CJK_SC','Source_Sans_Pro',sans-serif] text-[#31333f] shadow-[0_0_3px_rgba(0,0,0,0.25)]">
      <div className="h-[3px] bg-linear-to-r from-[#ff4b4b] to-[#fffd80]" />
      <div className="flex items-center justify-end gap-9 pt-[35px] pr-[54px]">
        <button type="button" className="text-[21px] leading-[42px]">Deploy</button>
        <button type="button" aria-label="Main menu" className="flex w-[18px] justify-center">
          <svg viewBox="0 0 6 24" className="h-6 w-1.5" fill="#31333f" aria-hidden="true">
            <circle cx="3" cy="3.500" r="2.700" />
            <circle cx="3" cy="12" r="2.700" />
            <circle cx="3" cy="20.500" r="2.700" />
          </svg>
        </button>
      </div>
      <div className="pr-[9px]">
        <div className="mx-auto flex max-w-[1161px] flex-col items-start">
          <h1 className="mt-[103px] text-[50px] leading-[70px] font-bold">Welcome to the lp school</h1>
          <label htmlFor="question" className="mt-[31px] text-[20px] leading-8">Input:</label>
          <input
            id="question"
            type="text"
            defaultValue="give the student kiran"
            className="mt-2.5 h-[66px] w-full rounded-xl bg-[#f0f2f6] px-3.5 text-[24px] outline-none"
          />
          <button type="button" className="mt-[26px] h-[66px] rounded-xl border border-[#ff4b4b] px-[19px] text-[24px] text-[#ff4b4b]">
            Ask the question
          </button>
          <p className="mt-7 text-[24px] leading-10">Generated SQL query: SELECT * FROM students WHERE name="kiran";</p>
          <h2 className="mt-[39px] text-[39px] leading-[54px] font-bold">The Response is</h2>
          <code className="mt-[34px] rounded-md bg-[#f8f9fb] px-1.5 font-['DejaVu_Sans_Mono',monospace] text-[20px] leading-8 text-[#09ab3b]">
            ('kiran', 'Class 11', 99)
          </code>
        </div>
      </div>
      <span className="absolute top-[99px] right-0 h-[625px] w-[9px] rounded-b-full bg-[#aeaeb2]" />
    </main>
  );
}

function TaskItem({ label, running = false, children }: { label: string; running?: boolean; children: React.ReactNode }) {
  return (
    <button type="button" aria-label={label} className="relative flex h-14 w-[66px] items-center justify-center">
      {children}
      {running && <span className="absolute bottom-0 h-[5px] w-[9px] rounded-full bg-[#6f8085]" />}
    </button>
  );
}

function Taskbar() {
  return (
    <footer className="flex h-[72px] items-center border-t-2 border-[#a9b8bf] bg-linear-to-r from-[#cbe8ea] via-[#c9e8ec] via-60% to-[#d4e9f4] pb-0.5 text-[#10181c]">
      <div className="w-[370px] pl-[30px]">
        <button type="button" aria-label="Weather" className="relative flex">
          <Weather />
          <span className="absolute -top-2 left-[17px] flex size-6 items-center justify-center rounded-full bg-[#c42b1c] text-base text-white">1</span>
        </button>
      </div>
      <TaskItem label="Start"><WindowsLogo /></TaskItem>
      <label className="ml-1.5 flex h-[46px] w-[328px] items-center rounded-full border border-[#bcd3dc] border-b-[#9fb5be] bg-[#f2f9fc] pr-[7px] pl-[15px]">
        <Magnifier className="size-6 shrink-0" strokeWidth={2.500} />
        <input type="text" aria-label="Search" placeholder="Search" className="ml-3.5 w-0 flex-1 bg-transparent text-xl outline-none placeholder:text-[#565c60]" />
        <Veggies />
      </label>
      <div className="ml-1 flex">
        <TaskItem label="Task view"><TaskView /></TaskItem>
        <TaskItem label="Microsoft Store"><Store /></TaskItem>
        <button type="button" aria-label="Microsoft Edge" className="relative mx-[5px] flex size-14 items-center justify-center rounded-md bg-[#e6f4f8] shadow-[0_0_2px_rgba(0,60,80,0.3)]">
          <Edge />
          <span className="absolute bottom-0 h-[5px] w-6 rounded-full bg-[#0078d4]" />
        </button>
        <TaskItem label="Chrome" running>
          <Chrome />
          <span className="absolute top-[3px] right-2 flex size-6 items-center justify-center rounded-full bg-[#ec407a] text-sm text-[#fbd3e0]">L</span>
        </TaskItem>
        <TaskItem label="File Explorer" running><Explorer /></TaskItem>
        <TaskItem label="Visual Studio Code" running><VSCode /></TaskItem>
        <TaskItem label="Notepad" running><Notepad /></TaskItem>
        <TaskItem label="Chrome, second profile" running>
          <Chrome />
          <span className="absolute top-[3px] right-[7px]"><Photo /></span>
        </TaskItem>
        <TaskItem label="Terminal" running><Terminal /></TaskItem>
      </div>
      <div className="ml-auto flex items-center pr-[30px] text-[17px] leading-[23px]">
        <IconButton label="Hidden icons"><ChevronUp /></IconButton>
        <button type="button" className="ml-7 w-10 text-center">ENG IN</button>
        <IconButton label="Network" className="ml-6"><Wifi /></IconButton>
        <IconButton label="Volume" className="ml-[9px]"><Speaker /></IconButton>
        <IconButton label="Battery" className="ml-3"><Battery /></IconButton>
        <button type="button" className="ml-6 text-right text-lg leading-[23px] whitespace-nowrap">20:08<br />05-08-2024</button>
        <IconButton label="Notifications" className="ml-3"><Bell /></IconButton>
        <button type="button" aria-label="Copilot preview" className="relative ml-[26px] flex h-9">
          <CopilotPre />
          <span className="absolute right-0 bottom-0 rounded-xs bg-[#ffc20e] px-1 text-[10px] leading-[11px] font-bold text-black">PRE</span>
        </button>
      </div>
    </footer>
  );
}

export default function App() {
  return (
    <div className="flex min-h-screen flex-col bg-[#f7f7f7] font-['Open_Sans','Segoe_UI',sans-serif] text-black">
      <TitleBar />
      <div className="flex flex-1">
        <div className="flex min-w-0 flex-1 flex-col pb-[5px]">
          <Toolbar />
          <Bookmarks />
          <AppPage />
        </div>
        <Sidebar />
      </div>
      <Taskbar />
    </div>
  );
}
